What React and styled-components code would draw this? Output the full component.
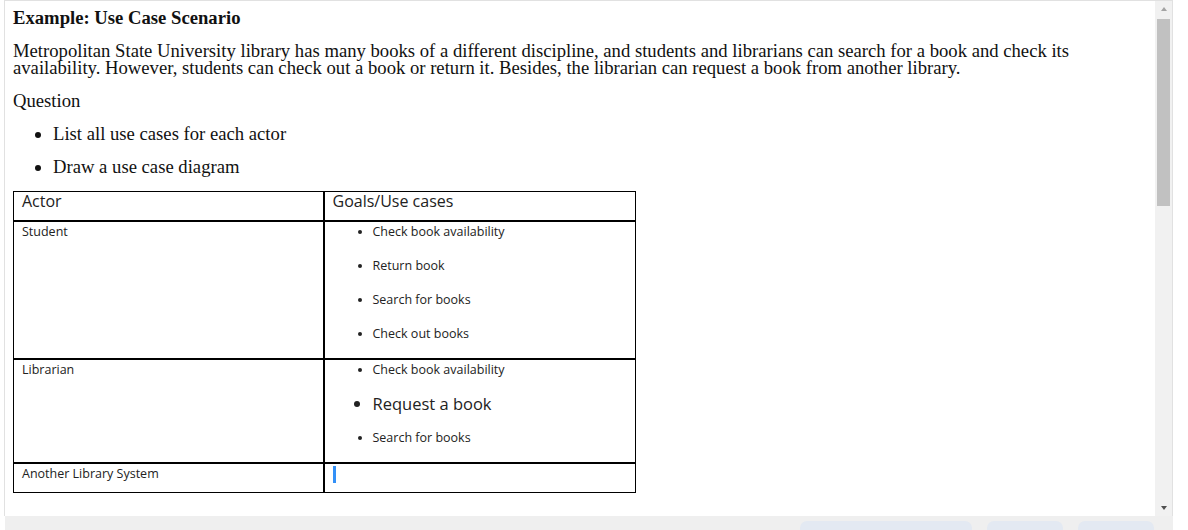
import React from 'react'
import styled, { createGlobalStyle } from 'styled-components'

const GlobalStyle = createGlobalStyle`
  html, body {
    margin: 0;
    padding: 0;
    background: #fff;
  }
`

const student = ['Check book availability', 'Return book', 'Search for books', 'Check out books']
const librarian = [
  { text: 'Check book availability' },
  { text: 'Request a book', big: true },
  { text: 'Search for books' },
]

const App = () => {
  return (
    <>
      <GlobalStyle />
      <StyledPage>
        <StyledFrame>
          <StyledContent>
            <StyledTitle>Example: Use Case Scenario</StyledTitle>
            <StyledPara>
              Metropolitan State University library has many books of a different discipline, and students and librarians can search for a book and check its availability. However, students can check out a book or return it. Besides, the librarian can request a book from another library.
            </StyledPara>
            <StyledQuestion>Question</StyledQuestion>
            <StyledTasks>
              <li>List all use cases for each actor</li>
              <li>Draw a use case diagram</li>
            </StyledTasks>
            <StyledTable>
              <tbody>
                <StyledRow $h={29}>
                  <StyledCell $head>Actor</StyledCell>
                  <StyledCell $head>Goals/Use cases</StyledCell>
                </StyledRow>
                <StyledRow $h={138}>
                  <StyledCell>Student</StyledCell>
                  <StyledCell>
                    <StyledGoals>
                      {student.map((g) => <StyledGoal key={g}>{g}</StyledGoal>)}
                    </StyledGoals>
                  </StyledCell>
                </StyledRow>
                <StyledRow $h={104}>
                  <StyledCell>Librarian</StyledCell>
                  <StyledCell>
                    <StyledGoals>
                      {librarian.map((g) => (
                        <StyledGoal key={g.text} $big={g.big}>{g.text}</StyledGoal>
                      ))}
                    </StyledGoals>
                  </StyledCell>
                </StyledRow>
                <StyledRow $h={30}>
                  <StyledCell>Another Library System</StyledCell>
                  <StyledCell><StyledCaret /></StyledCell>
                </StyledRow>
              </tbody>
            </StyledTable>
          </StyledContent>
          <StyledScrollbar>
            <StyledArrow $up />
            <StyledThumb />
            <StyledTrack />
            <StyledArrow />
          </StyledScrollbar>
        </StyledFrame>
        <StyledFooter>
          <StyledPill $w={172} />
          <StyledPill $w={76} />
          <StyledPill $w={76} />
        </StyledFooter>
      </StyledPage>
    </>
  )
}

const StyledPage = styled.div`
  width: 1188px;
  height: 530px;
  overflow: hidden;
  display: flex;
  flex-direction: column;
  background: #fff;
`

const StyledFrame = styled.div`
  flex-shrink: 0;
  margin-left: 4px;
  width: 1169px;
  height: 516px;
  display: flex;
  border-top: 1px solid #e1e1e1;
  border-left: 1px solid #e1e1e1;
  border-right: 1px solid #e1e1e1;
  box-sizing: border-box;
`

const StyledContent = styled.div`
  flex: 1;
  padding: 7px 0 0 8px;
  font-family: "Liberation Serif", "Times New Roman", serif;
  color: #111;
  overflow: hidden;
`

const StyledTitle = styled.div`
  font-size: 18.67px;
  font-weight: bold;
  line-height: 19px;
`

const StyledPara = styled.p`
  margin: 15px 0 0;
  font-size: 18.67px;
  line-height: 17px;
`

const StyledQuestion = styled.p`
  margin: 16px 0 0;
  font-size: 18.67px;
  line-height: 18px;
`

const StyledTasks = styled.ul`
  margin: 15px 0 0;
  padding-left: 40px;
  font-size: 18.67px;
  line-height: 18px;
  li {
    margin-bottom: 15px;
  }
`

const StyledTable = styled.table`
  border-collapse: collapse;
  width: 623px;
  table-layout: fixed;
  border: 1px solid #000;
  font-family: "Open Sans", "Liberation Sans", sans-serif;
  color: #222;
  tr + tr > td {
    border-top: 2px solid #000;
  }
`

const StyledRow = styled.tr`
  height: ${(p) => p.$h}px;
`

const StyledCell = styled.td`
  vertical-align: top;
  padding: ${(p) => (p.$head ? '0 8px' : '2px 8px')};
  font-size: ${(p) => (p.$head ? '16px' : '12.5px')};
  line-height: ${(p) => (p.$head ? '18px' : '16px')};
  box-sizing: border-box;
  &:first-child {
    width: 310px;
    border-right: 2px solid #000;
  }
`

const StyledGoals = styled.ul`
  margin: 0;
  padding-left: 40px;
`

const StyledGoal = styled.li`
  font-size: ${(p) => (p.$big ? '16.5px' : '12.5px')};
  line-height: 16px;
  margin-bottom: 18px;
  &:last-child {
    margin-bottom: 0;
  }
`

const StyledCaret = styled.div`
  width: 3px;
  height: 17px;
  background: #3390f7;
`

const StyledScrollbar = styled.div`
  width: 17px;
  background: #f1f1f1;
  display: flex;
  flex-direction: column;
  align-items: center;
`

const StyledArrow = styled.div`
  width: 0;
  height: 0;
  margin: ${(p) => (p.$up ? '6px 0 5px' : '5px 0 6px')};
  border-left: 3.5px solid transparent;
  border-right: 3.5px solid transparent;
  ${(p) => (p.$up ? 'border-bottom: 4px solid #a3a3a3;' : 'border-top: 4px solid #505050;')}
`

const StyledThumb = styled.div`
  width: 13px;
  height: 187px;
  background: #c1c1c1;
  margin-top: 3px;
`

const StyledTrack = styled.div`
  flex: 1;
`

const StyledFooter = styled.div`
  margin-left: 5px;
  width: 1168px;
  flex: 1;
  min-height: 0;
  overflow: hidden;
  background: #efefef;
  display: flex;
  justify-content: flex-end;
  align-items: flex-start;
  gap: 15px;
  padding: 5px 19px 0 0;
  box-sizing: border-box;
`

const StyledPill = styled.div`
  flex-shrink: 0;
  width: ${(p) => p.$w}px;
  height: 20px;
  border-radius: 7px;
  background: #e3e9f2;
`

export default App
